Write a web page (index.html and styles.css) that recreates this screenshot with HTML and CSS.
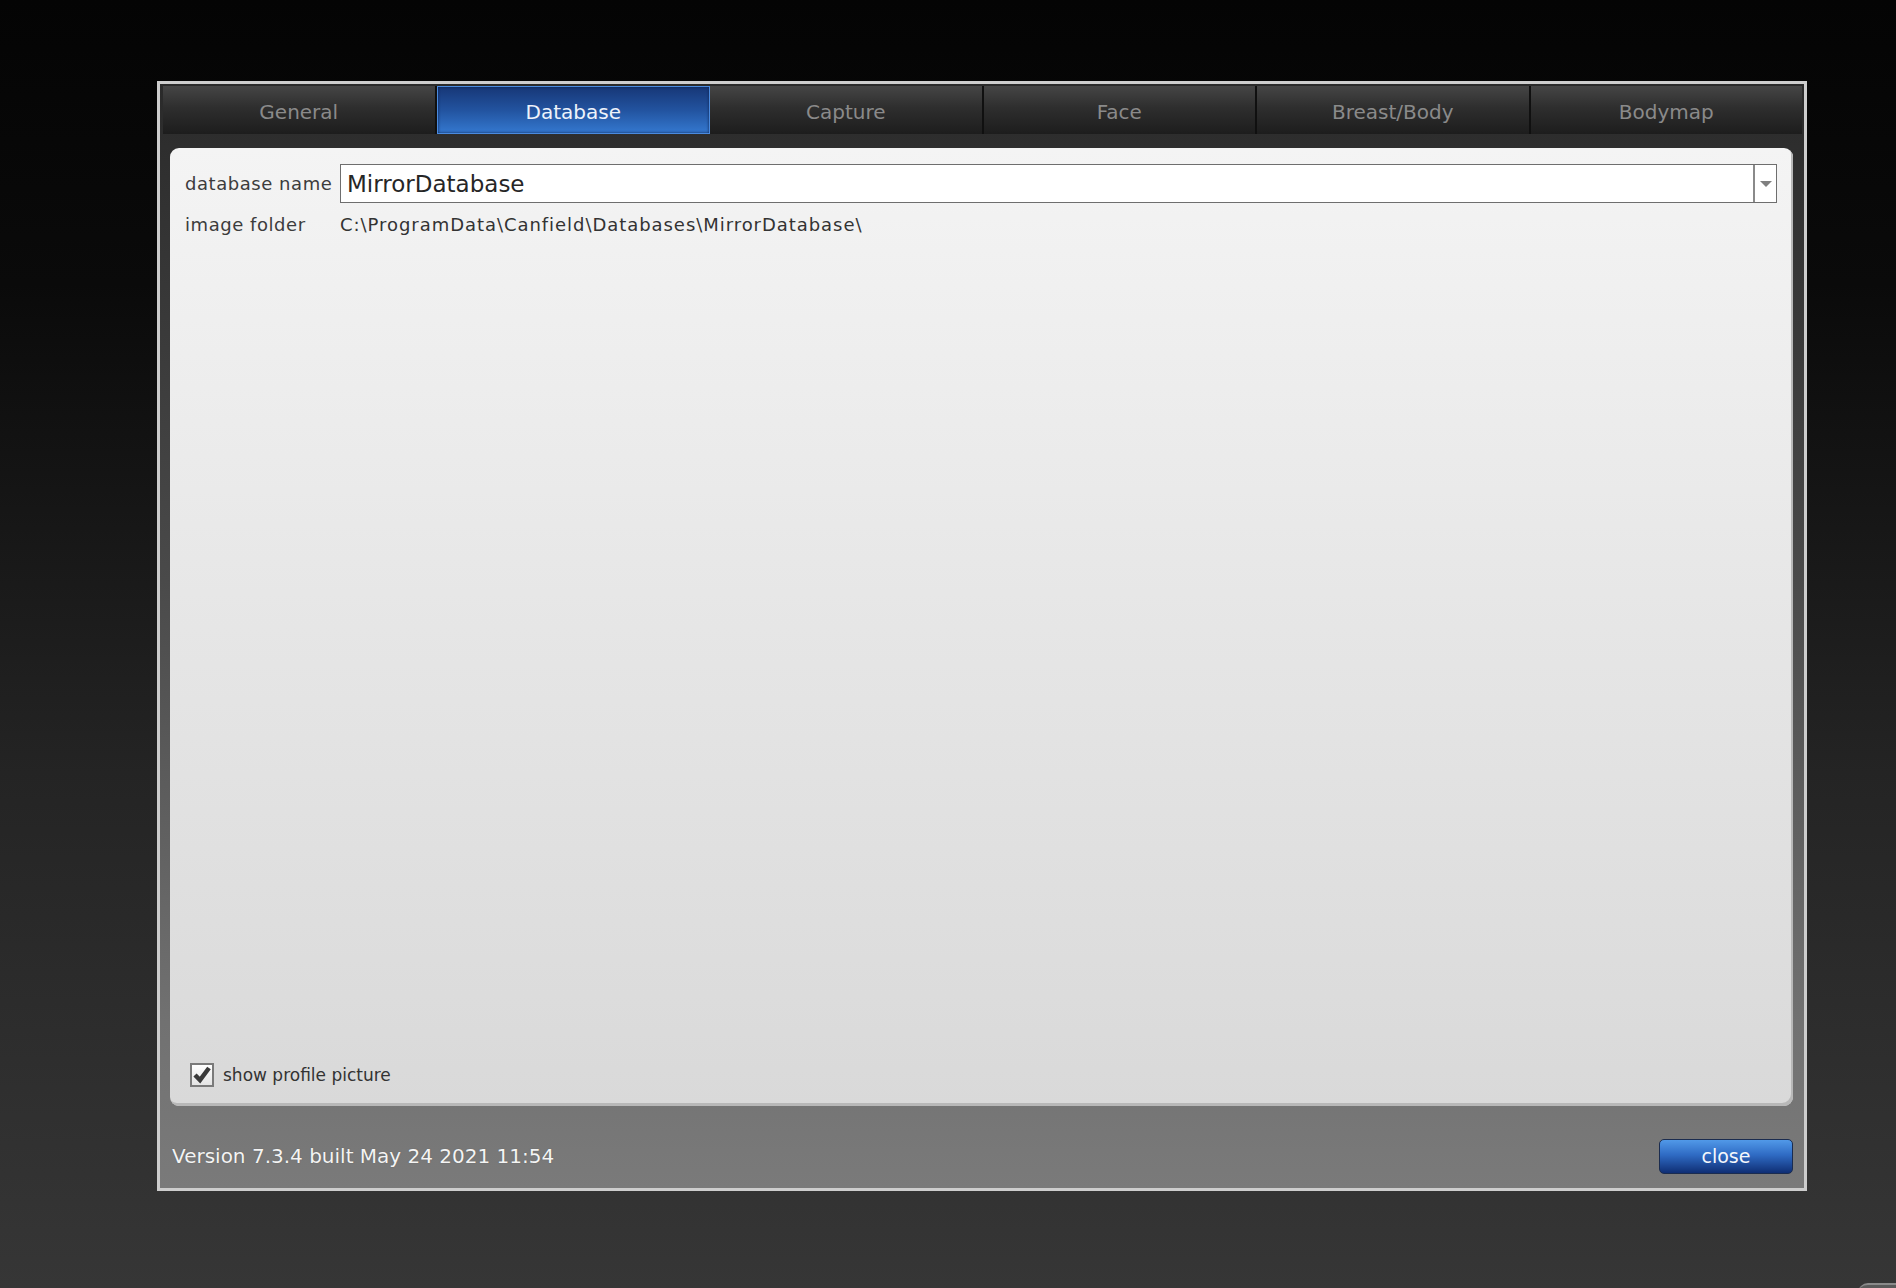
FILE: index.html
```html
<!DOCTYPE html>
<html lang="en">
<head>
  <meta charset="UTF-8">
  <title>Settings - Database</title>
  <link rel="stylesheet" href="styles.css">
</head>
<body>
  <div class="dialog">
    <div class="tabs">
      <div class="tab">General</div>
      <div class="tab active">Database</div>
      <div class="tab">Capture</div>
      <div class="tab">Face</div>
      <div class="tab">Breast/Body</div>
      <div class="tab">Bodymap</div>
    </div>

    <div class="panel">
      <div class="fields">
        <div class="label">database name</div>
        <div class="combo">
          <div class="combo-text">MirrorDatabase</div>
          <div class="combo-btn">
            <svg width="12" height="6" viewBox="0 0 12 6"><path d="M0 0 L12 0 L6 6 Z" fill="#7f7f7f"/></svg>
          </div>
        </div>
        <div class="label">image folder</div>
        <div class="path">C:\ProgramData\Canfield\Databases\MirrorDatabase\</div>
      </div>

      <label class="check-row">
        <span class="checkbox">
          <svg width="20" height="20" viewBox="0 0 20 20"><path d="M3 10 L8 15 L17 3" fill="none" stroke="#3a3a3a" stroke-width="4.5"/></svg>
        </span>
        show profile picture
      </label>
    </div>

    <div class="footer">
      <div class="version">Version 7.3.4 built May 24 2021 11:54</div>
      <button class="close-btn">close</button>
    </div>
  </div>
  <div class="corner"></div>
</body>
</html>
```

FILE: styles.css
```css
html, body {
  margin: 0;
  height: 1288px;
}
body {
  background: linear-gradient(to bottom, #040404 0%, #0a0a0a 22%, #242424 60%, #363636 100%);
  font-family: "DejaVu Sans", Verdana, sans-serif;
  padding: 81px 0 0 157px;
  box-sizing: border-box;
  overflow: hidden;
  position: relative;
}
.dialog {
  width: 1650px;
  height: 1110px;
  box-sizing: border-box;
  border: 3px solid #cdcdcd;
  background: linear-gradient(to bottom, #2a2a2a 0%, #4a4a4a 45%, #717171 85%, #7a7a7a 100%);
  display: flex;
  flex-direction: column;
  padding: 2px 2px 0 3px;
}
.tabs {
  display: flex;
  height: 48px;
  background: #0e0e0e;
}
.tab {
  flex: 1;
  display: flex;
  align-items: center;
  justify-content: center;
  padding-top: 3px;
  font-size: 20px;
  color: #8a8a8a;
  background: linear-gradient(to bottom, #454545 0%, #2e2e2e 45%, #1d1d1d 100%);
  border-right: 2px solid #101010;
  box-sizing: border-box;
}
.tab:last-child {
  border-right: none;
}
.tab.active {
  color: #eef3fb;
  background: linear-gradient(to bottom, #173777 0%, #22539f 50%, #3478cf 100%);
  border: 1px solid #4a8ade;
  box-shadow: inset 0 0 3px #0c2250;
}
.panel {
  margin: 14px 9px 0 7px;
  height: 958px;
  box-sizing: border-box;
  border-radius: 9px;
  background: linear-gradient(to bottom, #f4f4f4 0%, #e6e6e6 50%, #d9d9d9 100%);
  box-shadow: inset -2px -3px 0 #b8b8b8;
  padding: 16px 16px 19px 15px;
  display: flex;
  flex-direction: column;
}
.fields {
  display: grid;
  grid-template-columns: 155px 1fr;
  align-items: center;
  row-gap: 2px;
}
.label {
  font-size: 18px;
  letter-spacing: 0.55px;
  color: #3c3c3c;
}
.combo {
  display: flex;
  height: 39px;
  box-sizing: border-box;
  border: 1px solid #6e6e6e;
  background: #fff;
}
.combo-text {
  flex: 1;
  display: flex;
  align-items: center;
  padding-left: 6px;
  font-size: 23px;
  color: #262626;
}
.combo-btn {
  width: 21px;
  border-left: 2px solid #8a8a8a;
  display: flex;
  align-items: center;
  justify-content: center;
}
.path {
  font-size: 18px;
  letter-spacing: 0.95px;
  color: #333;
  height: 38px;
  display: flex;
  align-items: center;
}
.check-row {
  margin-top: auto;
  display: flex;
  align-items: center;
  gap: 9px;
  padding-left: 5px;
  font-size: 17px;
  color: #333;
}
.checkbox {
  width: 24px;
  height: 24px;
  box-sizing: border-box;
  border: 2px solid #7a7a7a;
  background: linear-gradient(to bottom, #ffffff, #e4e4e4);
  display: flex;
  align-items: center;
  justify-content: center;
}
.footer {
  flex: 1;
  display: flex;
  align-items: center;
  justify-content: space-between;
  padding: 18px 9px 0 9px;
}
.version {
  font-size: 20px;
  color: #f4f4f4;
  text-shadow: 0 0 1px #555;
}
.close-btn {
  width: 134px;
  height: 35px;
  border: 1px solid #1b2c4f;
  border-radius: 5px;
  background: linear-gradient(to bottom, #5199e8 0%, #2f6bc4 45%, #0f2e74 100%);
  color: #f4f7fc;
  font-family: "DejaVu Sans", Verdana, sans-serif;
  font-size: 19px;
  padding: 0;
}
.corner {
  position: absolute;
  left: 1858px;
  top: 1283px;
  width: 60px;
  height: 20px;
  border-top: 2px solid #8a8a8a;
  border-radius: 10px 0 0 0;
  background: #5a5a5a;
}
```
